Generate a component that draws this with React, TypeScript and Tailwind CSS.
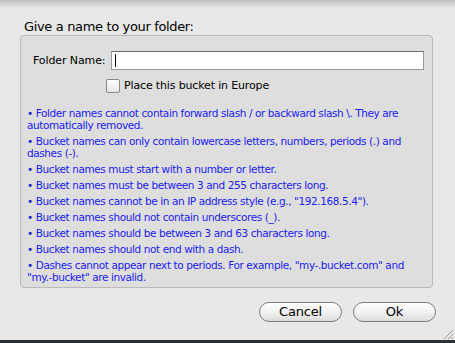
import React from "react";

const rules: string[][] = [
  ["• Folder names cannot contain forward slash / or backward slash \\. They are", "automatically removed."],
  ["• Bucket names can only contain lowercase letters, numbers, periods (.) and", "dashes (-)."],
  ["• Bucket names must start with a number or letter."],
  ["• Bucket names must be between 3 and 255 characters long."],
  ["• Bucket names cannot be in an IP address style (e.g., \"192.168.5.4\")."],
  ["• Bucket names should not contain underscores (_)."],
  ["• Bucket names should be between 3 and 63 characters long."],
  ["• Bucket names should not end with a dash."],
  ["• Dashes cannot appear next to periods. For example, \"my-.bucket.com\" and", "\"my.-bucket\" are invalid."],
];

export default function App() {
  return (
    <div className="w-[455px] h-[343px] overflow-hidden bg-[#e8e8e8] flex flex-col" style={{ fontFamily: '"DejaVu Sans", "Lucida Grande", sans-serif' }}>
      <div className="relative h-[340px] flex flex-col">
        <div className="absolute left-0 right-0 top-0 h-[8px] bg-gradient-to-b from-[#bdbdbd] to-[#e8e8e8]" />
        <div className="pl-[24px] pt-[18px] text-[13px] leading-[17px] tracking-[-0.35px] text-black whitespace-nowrap">Give a name to your folder:</div>
        <div className="ml-[20px] mr-[22px] mt-[0px] h-[253px] rounded-[4px] border border-[#b9b9b9] bg-[#dedede] flex flex-col">
          <div className="flex items-center mt-[15px] pl-[12px] pr-[8px]">
            <div className="w-[78px] shrink-0 whitespace-nowrap text-[11px] tracking-[-0.1px] leading-[18px] text-black">Folder Name:</div>
            <div className="flex-1 h-[19px] bg-white border border-[#9a9a9a] border-t-[#6e6e6e] flex items-center pl-[3px]">
              <div className="w-px h-[13px] bg-black" />
            </div>
          </div>
          <div className="flex items-center mt-[8px] pl-[85px]">
            <div className="w-[14px] h-[14px] rounded-[2px] border border-[#8a8a8a] bg-gradient-to-b from-white to-[#e6e6e6]" />
            <div className="ml-[4px] text-[11px] tracking-[-0.15px] leading-[15px] text-black whitespace-nowrap">Place this bucket in Europe</div>
          </div>
          <div className="mt-[14px] pl-[6px] flex flex-col gap-[4px] text-[#1c1cf5] text-[10.5px] leading-[12px] tracking-[-0.4px]">
            {rules.map((r, i) => (
              <div key={i}>
                {r.map((l, j) => (
                  <div key={j} className="whitespace-nowrap">{l}</div>
                ))}
              </div>
            ))}
          </div>
        </div>
        <div className="flex justify-end gap-[11px] mt-[14px] mr-[19px]">
          {["Cancel", "Ok"].map((t) => (
            <div key={t} className="w-[83px] h-[20px] rounded-full border border-[#7d7d7d] bg-gradient-to-b from-white via-[#f2f2f2] to-[#dcdcdc] flex items-center justify-center text-[13px] tracking-[-0.2px] text-black leading-[16px]">
              {t}
            </div>
          ))}
        </div>
        <svg className="absolute right-[2px] bottom-[1px]" width="10" height="10" viewBox="0 0 10 10">
          <line x1="1" y1="10" x2="10" y2="1" stroke="#9a9a9a" strokeWidth="1" />
          <line x1="5" y1="10" x2="10" y2="5" stroke="#9a9a9a" strokeWidth="1" />
          <line x1="8" y1="10" x2="10" y2="8" stroke="#9a9a9a" strokeWidth="1" />
        </svg>
      </div>
      <div className="h-[3px] bg-[#2a2f3a]" />
    </div>
  );
}
